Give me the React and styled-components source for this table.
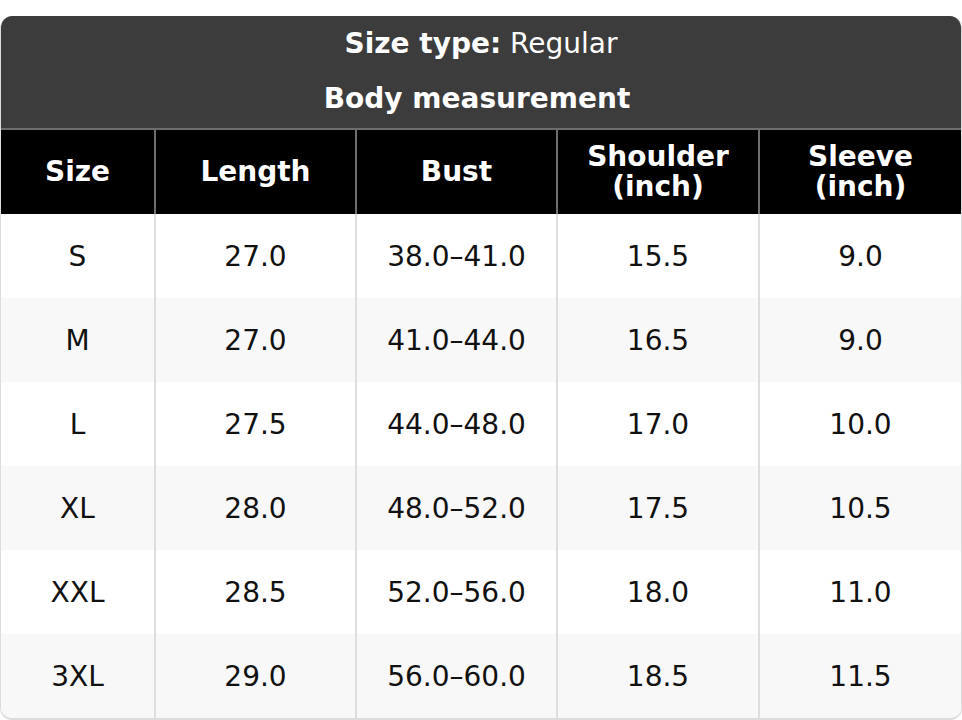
import React from 'react';
import styled, { createGlobalStyle } from 'styled-components';

const GlobalStyle = createGlobalStyle`
  html, body {
    margin: 0;
    padding: 0;
    background: #fff;
  }
  body {
    font-family: "DejaVu Sans", Verdana, sans-serif;
  }
`;

const Page = styled.div`
  padding-top: 16px;
  width: 962px;
`;

const Card = styled.div`
  border: 1px solid #dcdcdc;
  border-top: none;
  border-bottom-width: 2px;
  border-radius: 12px;
  overflow: hidden;
  background: #fff;
`;

const Banner = styled.div`
  background: #3c3c3c;
  color: #fff;
  text-align: center;
  font-size: 28px;
  padding-bottom: 2px;
  border-bottom: 2px solid #6e6e6e;
`;

const BannerLine = styled.div`
  height: 55px;
  line-height: 55px;
  font-weight: ${(p) => (p.$bold ? 700 : 400)};
  padding-right: ${(p) => (p.$bold ? '8px' : '0')};
`;

const Table = styled.table`
  width: 100%;
  border-collapse: collapse;
  table-layout: fixed;
  font-size: 28px;
`;

const HeadCell = styled.th`
  background: #000;
  color: #fff;
  font-weight: 700;
  height: 84px;
  line-height: 30px;
  padding: 0 8px;
  text-align: center;
  border-left: 2px solid #6e6e6e;
  &:first-child {
    border-left: none;
  }
`;

const Row = styled.tr`
  background: ${(p) => (p.$alt ? '#f8f8f8' : '#fff')};
`;

const Cell = styled.td`
  height: 84px;
  padding: 0;
  text-align: center;
  color: #111;
  border-left: 2px solid #dedede;
  &:first-child {
    border-left: none;
  }
`;

const columns = [
  { label: 'Size', width: 154 },
  { label: 'Length', width: 201 },
  { label: 'Bust', width: 201 },
  { label: ['Shoulder', '(inch)'], width: 202 },
  { label: ['Sleeve', '(inch)'], width: 202 },
];

const rows = [
  ['S', '27.0', '38.0–41.0', '15.5', '9.0'],
  ['M', '27.0', '41.0–44.0', '16.5', '9.0'],
  ['L', '27.5', '44.0–48.0', '17.0', '10.0'],
  ['XL', '28.0', '48.0–52.0', '17.5', '10.5'],
  ['XXL', '28.5', '52.0–56.0', '18.0', '11.0'],
  ['3XL', '29.0', '56.0–60.0', '18.5', '11.5'],
];

export default function App() {
  return (
    <Page>
      <GlobalStyle />
      <Card>
        <Banner>
          <BannerLine>
            <b>Size type:</b> Regular
          </BannerLine>
          <BannerLine $bold>Body measurement</BannerLine>
        </Banner>
        <Table>
          <colgroup>
            {columns.map((c, i) => (
              <col key={i} style={{ width: c.width }} />
            ))}
          </colgroup>
          <thead>
            <tr>
              {columns.map((c, i) => (
                <HeadCell key={i}>
                  {Array.isArray(c.label) ? (
                    <>
                      {c.label[0]}
                      <br />
                      {c.label[1]}
                    </>
                  ) : (
                    c.label
                  )}
                </HeadCell>
              ))}
            </tr>
          </thead>
          <tbody>
            {rows.map((r, i) => (
              <Row key={i} $alt={i % 2 === 1}>
                {r.map((v, j) => (
                  <Cell key={j}>{v}</Cell>
                ))}
              </Row>
            ))}
          </tbody>
        </Table>
      </Card>
    </Page>
  );
}
